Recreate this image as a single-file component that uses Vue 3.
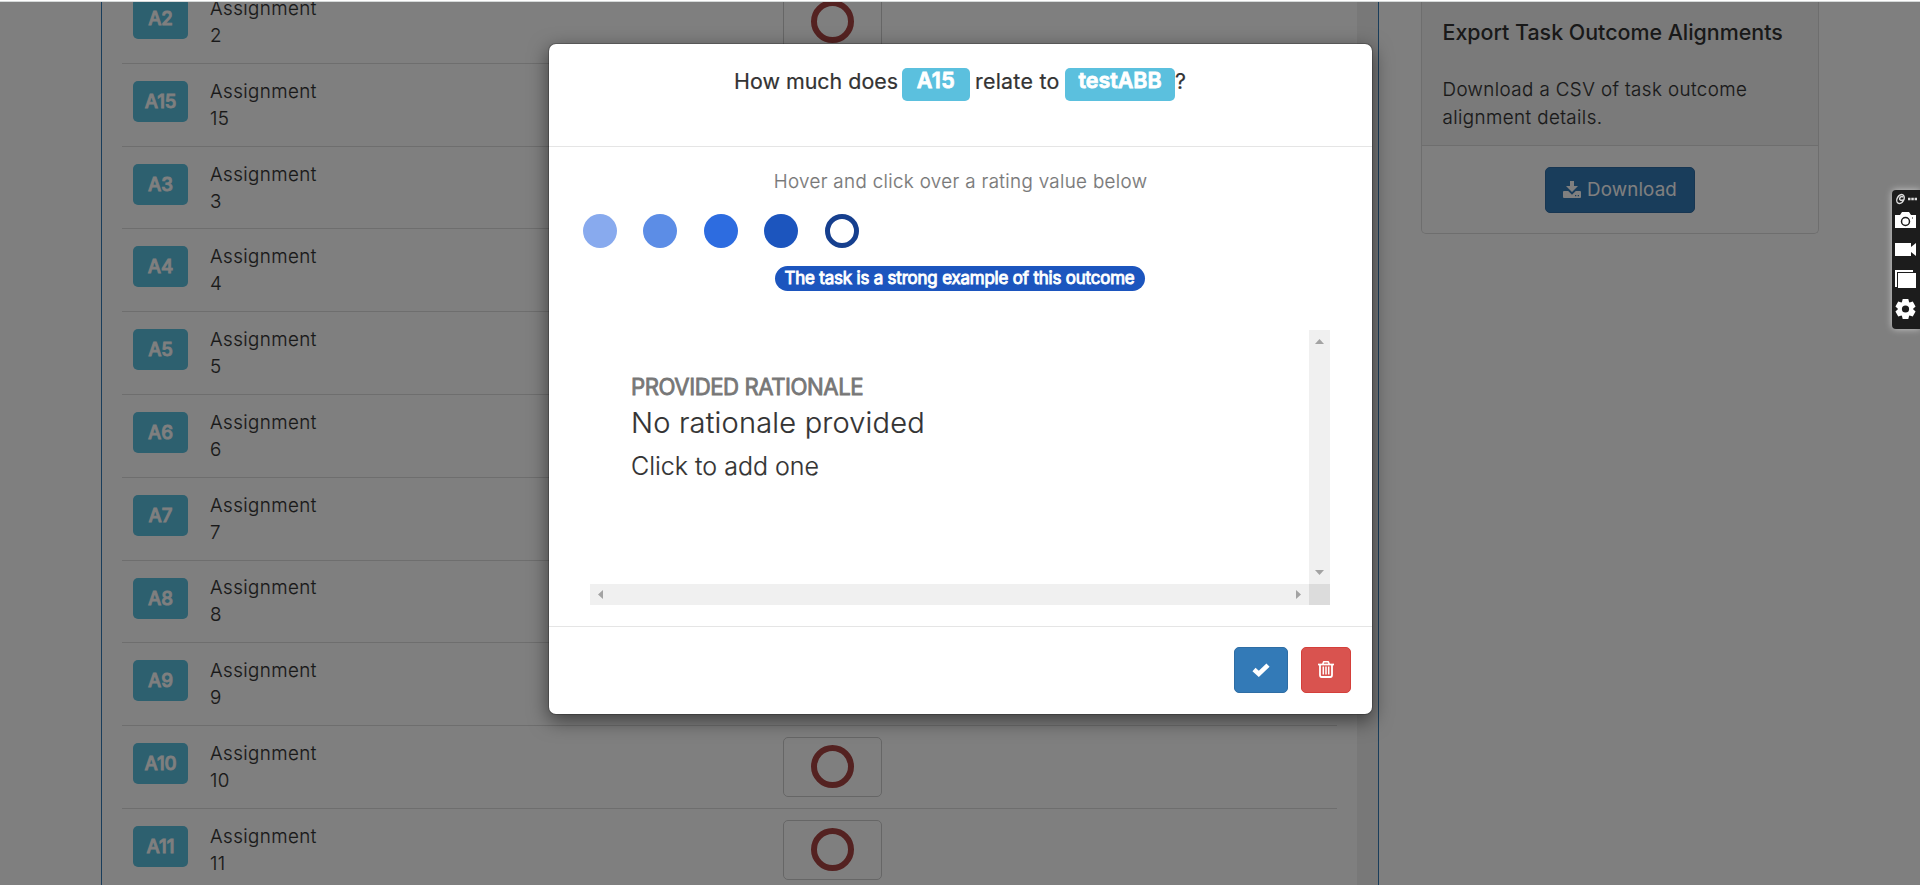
<script setup>
const tasks = [2, 15, 3, 4, 5, 6, 7, 8, 9, 10, 11]
const ratings = ['#88aaee', '#5c8de6', '#2d6ce0', '#1c55be']
</script>

<template>
  <div class="page">
    <main class="content">
      <section class="panel">
        <div class="rows">
          <div v-for="n in tasks" :key="n" class="row">
            <span class="tag">A{{ n }}</span>
            <span class="name">Assignment<br />{{ n }}</span>
            <span class="rating"><i class="ring"></i></span>
          </div>
        </div>
        <div class="track"></div>
      </section>
      <aside class="card">
        <div class="card-head">
          <h4>Export Task Outcome Alignments</h4>
          <p>Download a CSV of task outcome<br />alignment details.</p>
        </div>
        <div class="card-body">
          <button class="download">
            <svg width="18" height="17" viewBox="0 0 18 17" fill="currentColor"><path d="M7 0h4v5h4L9 11 3 5h4z" /><path fill-rule="evenodd" d="M1 10h4.2L9 13.700l3.800-3.700H17q1 0 1 1v5q0 1-1 1H1q-1 0-1-1v-5q0-1 1-1zM12 14v1.300h1.300V14zm2.700 0v1.300H16V14z" /></svg>
            <span>Download</span>
          </button>
        </div>
      </aside>
    </main>

    <div class="backdrop"></div>
    <div class="topline"></div>

    <div class="modal">
      <header class="modal-head">
        <span class="q1">How much does</span>
        <span class="chip chip-a">A15</span>
        <span class="q2">relate to</span>
        <span class="chip chip-b">testABB</span>
        <span class="q3">?</span>
      </header>
      <div class="modal-body">
        <p class="hint">Hover and click over a rating value below</p>
        <div class="dots">
          <i v-for="c in ratings" :key="c" class="dot" :style="{ background: c }"></i>
          <i class="dot hollow"></i>
        </div>
        <div class="pill-row"><span class="pill">The task is a strong example of this outcome</span></div>
        <div class="scroller">
          <div class="rationale">
            <div class="r-label">PROVIDED RATIONALE</div>
            <div class="r-main">No rationale provided</div>
            <div class="r-sub">Click to add one</div>
          </div>
          <div class="vbar">
            <svg width="9" height="5" viewBox="0 0 9 5"><path d="M0 5h9L4.500 0z" fill="#a3a3a3" /></svg>
            <svg width="9" height="5" viewBox="0 0 9 5"><path d="M0 0h9L4.500 5z" fill="#a3a3a3" /></svg>
          </div>
          <div class="hbar">
            <svg width="5" height="9" viewBox="0 0 5 9"><path d="M5 0v9L0 4.500z" fill="#a3a3a3" /></svg>
            <svg width="5" height="9" viewBox="0 0 5 9"><path d="M0 0v9l5-4.500z" fill="#a3a3a3" /></svg>
          </div>
          <div class="corner"></div>
        </div>
      </div>
      <footer class="modal-foot">
        <button class="ok">
          <svg width="18" height="14" viewBox="0 0 18 14"><path d="M2 6.500l4.800 4.400L16 2.200" fill="none" stroke="#fff" stroke-width="4.600" stroke-linejoin="miter" /></svg>
        </button>
        <button class="del">
          <svg width="16" height="17" viewBox="0 0 16 17" fill="none" stroke="#fff"><path d="M0 3.500h16" stroke-width="1.700" /><path d="M4.700 3.500l.8-2.300q.2-.5.8-.5h3.400q.6 0 .8.500l.8 2.300" stroke-width="1.600" /><path d="M2 3.500V14q0 2 1.700 2h8.600Q14 16 14 14V3.500" stroke-width="1.800" /><path d="M5.300 5.500v8M8 5.500v8M10.700 5.500v8" stroke-width="1.500" /></svg>
        </button>
      </footer>
    </div>

    <div class="toolbar">
      <svg width="28" height="139" viewBox="0 0 28 139">
        <g fill="none" stroke="#ddd" stroke-width="1.500"><ellipse cx="8.500" cy="9" rx="3.300" ry="4.800" transform="rotate(30 8.500 9)" /><path d="M11.500 7.200q-3-1.600-3.800 1.200-.5 2.600 3.500 1.600" /></g>
        <path d="M16 7.700h2.500v2.500H16zm3.300 0h2.500v2.500h-2.500zm3.300 0H25v2.500h-2.400z" fill="#ddd" />
        <path d="M3 25h5l2-3h7l2 3h5v13H3z" fill="#fff" />
        <circle cx="13.500" cy="31.500" r="4" fill="none" stroke="#1c1c1c" stroke-width="1.500" />
        <path d="M20 27.500h1v1h-1z" fill="#1c1c1c" />
        <path d="M3 53h16v4l5-4v13l-5-4v4H3z" fill="#fff" />
        <path d="M3 80h18v2H5v15H3z" fill="#fff" /><path d="M6 83h18v15H6z" fill="#fff" />
        <g transform="translate(13.500 119)" fill="#fff"><circle r="7.600" /><g v-for="a in [0, 60, 120]" :key="a" :transform="`rotate(${a})`"><path d="M-2.800-10h5.600l1 4h-7.600zM-2.800 10h5.600l1-4h-7.600z" /></g><circle r="3.600" fill="#1c1c1c" /></g>
      </svg>
    </div>
  </div>
</template>

<style>
html, body { margin: 0; overflow: hidden; }
</style>

<style scoped>
.page { position: relative; width: 1920px; height: 885px; overflow: hidden; background: #fff; color: #333; font-family: Inter, "Liberation Sans", sans-serif; font-size: 18.75px; line-height: 27px; font-weight: 300; box-sizing: border-box; }
.page *, .page *::before { box-sizing: border-box; }
p, h4 { margin: 0; }
button { border: 1px solid; border-radius: 5px; padding: 0; font: inherit; color: #fff; display: flex; align-items: center; justify-content: center; }
svg { display: block; flex: none; }
.content { display: flex; align-items: flex-start; padding-left: 101px; height: 885px; overflow: hidden; }
.panel { width: 1278px; height: 885px; border: solid #337ab7; border-width: 0 1px; display: flex; overflow: hidden; }
.rows { width: 1215px; margin: -19px 20px 0; flex: none; }
.row { height: 82.8px; border-bottom: 1px solid #ddd; display: flex; padding: 17px 0 0 11px; }
.tag { width: 55px; height: 41px; border-radius: 5px; background: #5bc0de; color: #fff; font-weight: 500; -webkit-text-stroke: .8px #fff; text-align: center; line-height: 41px; letter-spacing: -.1px; }
.name { width: 595px; padding-left: 22px; letter-spacing: .42px; margin-top: -3.100px; color: #333; -webkit-text-stroke: .15px; }
.rating { width: 99px; height: 60px; border: 1px solid #ccc; border-radius: 5px; display: flex; justify-content: center; padding-top: 7px; margin-top: -6px; }
.ring { width: 43px; height: 43px; border: 6px solid #a94442; border-radius: 50%; }
.track { width: 21px; background: #f0f0f0; flex: none; }
.card { width: 398px; height: 234px; margin-left: 42px; border: 1px solid #ddd; border-top: 0; border-radius: 0 0 5px 5px; }
.card-head { height: 146px; padding: 18px 20.500px 0; background: #f5f5f5; border-bottom: 1px solid #ddd; }
.card-head h4 { font-size: 21.400px; font-weight: 500; line-height: 28px; white-space: nowrap; }
.card-head p { margin-top: 30px; line-height: 28px; letter-spacing: .42px; white-space: nowrap; -webkit-text-stroke: .15px; }
.card-body { padding-top: 21px; display: flex; justify-content: center; }
.download { width: 150px; height: 46px; background: #337ab7; border-color: #2e6da4; gap: 6px; font-weight: 400; padding: 0 0 1px; letter-spacing: .15px; }
.backdrop { position: absolute; inset: 0; background: rgba(0, 0, 0, .5); }
.topline { position: absolute; inset: 0 0 auto; height: 2px; background: #fff; border-bottom: 1px solid #d5d9d9; }
.modal { position: absolute; left: 548px; top: 43px; width: 825px; height: 672px; background: #fff; border: 1px solid rgba(0, 0, 0, .2); background-clip: padding-box; border-radius: 8px; box-shadow: 0 6px 19px rgba(0, 0, 0, .5); }
.modal-head { height: 103px; border-bottom: 1px solid #e5e5e5; display: flex; padding: 24px 0 0 185px; font-size: 21.400px; font-weight: 400; -webkit-text-stroke: .2px; white-space: nowrap; line-height: 27px; }
.q1 { width: 168px; letter-spacing: .02px; }
.q2 { width: 90px; margin-left: 5px; letter-spacing: .25px; }
.chip { height: 33px; border-radius: 5px; background: #5bc0de; color: #fff; font-weight: 600; -webkit-text-stroke: .8px #fff; text-align: center; line-height: 25px; }
.chip-a { width: 68px; letter-spacing: .4px; }
.chip-b { width: 110px; letter-spacing: 0; }
.hint { text-align: center; color: #777; margin-top: 21px; height: 27px; letter-spacing: .36px; white-space: nowrap; -webkit-text-stroke: .2px; }
.dots { display: flex; gap: 26.500px; padding-left: 33.500px; margin-top: 19px; }
.dot { width: 34px; height: 34px; border-radius: 50%; }
.hollow { border: 5px solid #163f8e; }
.pill-row { display: flex; justify-content: center; margin-top: 18px; padding-right: 2px; }
.pill { width: 370px; height: 25px; border-radius: 12.500px; background: #1c55be; color: #fff; font-size: 16.900px; font-weight: 400; -webkit-text-stroke: .9px #fff; letter-spacing: -.17px; line-height: 25px; text-align: center; white-space: nowrap; }
.scroller { width: 740px; height: 275px; margin: 39px 0 0 41px; display: grid; grid-template: 254px 21px / 719px 21px; }
.rationale { padding: 43px 0 0 41px; white-space: nowrap; }
.r-label { color: #777; font-size: 22.200px; font-weight: 400; -webkit-text-stroke: .8px #777; letter-spacing: -.46px; line-height: 28px; }
.r-main { font-size: 29px; line-height: 40px; margin-top: 2px; letter-spacing: .2px; -webkit-text-stroke: .2px; }
.r-sub { font-size: 25px; line-height: 36px; margin-top: 5px; -webkit-text-stroke: .2px; }
.vbar { background: #f0f0f0; display: flex; flex-direction: column; align-items: center; justify-content: space-between; padding: 9px 0; }
.hbar { background: #f0f0f0; display: flex; align-items: center; justify-content: space-between; padding: 0 8px; }
.corner { background: #dcdcdc; }
.modal-foot { margin-top: 21px; border-top: 1px solid #e5e5e5; height: 87px; display: flex; justify-content: flex-end; gap: 13px; padding: 20px 21px 0 0; }
.ok, .del { padding-bottom: 1px; }
.ok { width: 54px; height: 46px; background: #337ab7; border-color: #2e6da4; }
.del { width: 50px; height: 46px; background: #d9534f; border-color: #d43f3a; }
.toolbar { position: absolute; left: 1892px; top: 190px; width: 28px; height: 139px; background: #1c1c1c; border-radius: 4px 0 0 4px; box-shadow: 0 0 7px rgba(255, 255, 255, .6); }
</style>
